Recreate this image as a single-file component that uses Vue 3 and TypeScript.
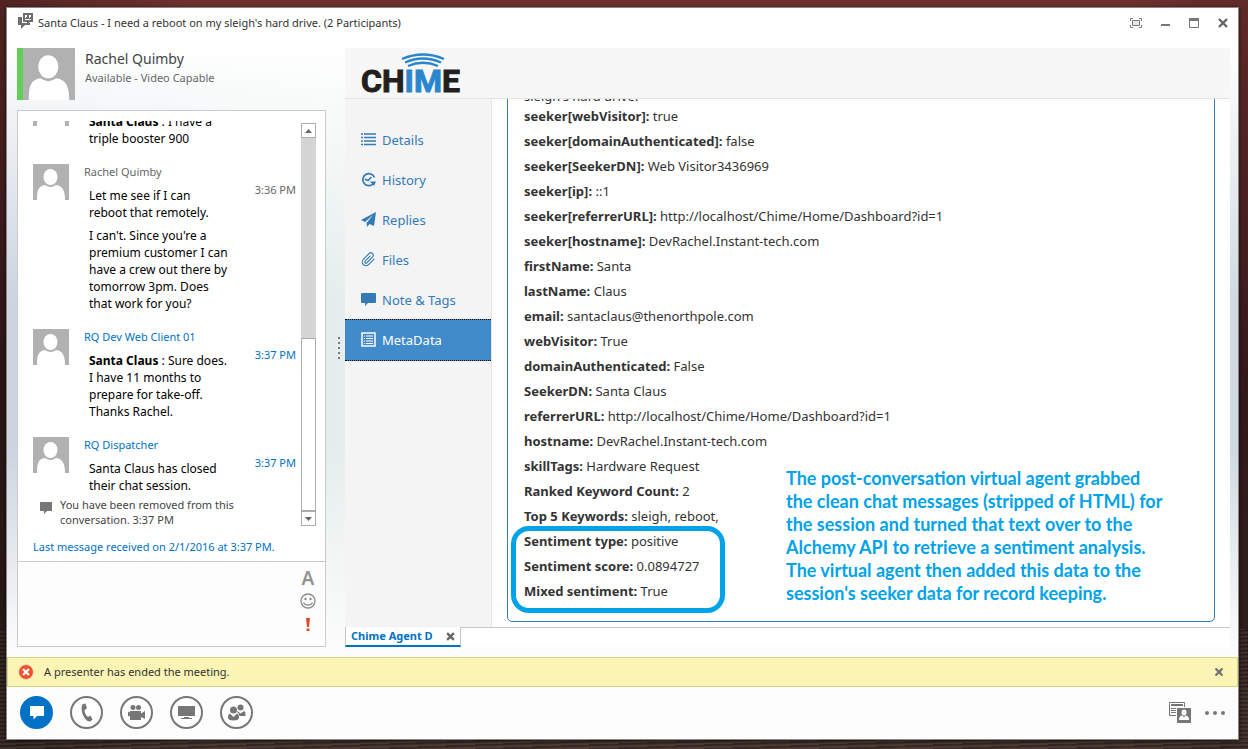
<script setup lang="ts">
interface ChatEntry { name: string; self?: boolean; time?: string; paragraphs: { speaker?: string; text: string }[] }
interface Field { label: string; value: string }

const chat: ChatEntry[] = [
  { name: 'RQ Dev Web Client 01', paragraphs: [{ speaker: 'Santa Claus', text: ' : I have a\ntriple booster 900' }] },
  {
    name: 'Rachel Quimby', self: true, time: '3:36 PM', paragraphs: [
      { text: 'Let me see if I can\nreboot that remotely.' },
      { text: "I can't. Since you're a\npremium customer I can\nhave a crew out there by\ntomorrow 3pm. Does\nthat work for you?" },
    ],
  },
  { name: 'RQ Dev Web Client 01', time: '3:37 PM', paragraphs: [{ speaker: 'Santa Claus', text: ' : Sure does.\nI have 11 months to\nprepare for take-off.\nThanks Rachel.' }] },
  { name: 'RQ Dispatcher', time: '3:37 PM', paragraphs: [{ text: 'Santa Claus has closed\ntheir chat session.' }] },
]

const fields: Field[] = [
  { label: 'seeker[webVisitor]:', value: 'true' },
  { label: 'seeker[domainAuthenticated]:', value: 'false' },
  { label: 'seeker[SeekerDN]:', value: 'Web Visitor3436969' },
  { label: 'seeker[ip]:', value: '::1' },
  { label: 'seeker[referrerURL]:', value: 'http://localhost/Chime/Home/Dashboard?id=1' },
  { label: 'seeker[hostname]:', value: 'DevRachel.Instant-tech.com' },
  { label: 'firstName:', value: 'Santa' },
  { label: 'lastName:', value: 'Claus' },
  { label: 'email:', value: 'santaclaus@thenorthpole.com' },
  { label: 'webVisitor:', value: 'True' },
  { label: 'domainAuthenticated:', value: 'False' },
  { label: 'SeekerDN:', value: 'Santa Claus' },
  { label: 'referrerURL:', value: 'http://localhost/Chime/Home/Dashboard?id=1' },
  { label: 'hostname:', value: 'DevRachel.Instant-tech.com' },
  { label: 'skillTags:', value: 'Hardware Request' },
  { label: 'Ranked Keyword Count:', value: '2' },
  { label: 'Top 5 Keywords:', value: 'sleigh, reboot,' },
]
const sentiment: Field[] = [
  { label: 'Sentiment type:', value: 'positive' },
  { label: 'Sentiment score:', value: '0.0894727' },
  { label: 'Mixed sentiment:', value: 'True' },
]
const nav = ['Details', 'History', 'Replies', 'Files', 'Note & Tags', 'MetaData']
</script>

<template>
  <div class="desktop">
    <main class="window">
      <header class="titlebar">
        <svg class="app-icon" width="16" height="17" viewBox="0 0 16 17" aria-hidden="true">
          <path fill="#6d6d6d" d="M0 4h4v6h8v2H7l-4 4v-4H0z" />
          <path fill="#6d6d6d" d="M5 0h10v9h-3l-3 3v-3H5z" />
          <path fill="#fff" d="M7 2h2v2H8v1H7zM11 2h2v2h-1v1h-1zM7 6h6v1H7z" />
        </svg>
        <h1>Santa Claus - I need a reboot on my sleigh's hard drive. (2 Participants)</h1>
        <div class="window-buttons">
          <button aria-label="Full screen">
            <svg width="12" height="10" viewBox="0 0 12 10"><path fill="none" stroke="#777" d="M.5 3V.5H3M9 .5h2.500V3M11.500 7v2.500H9M3 9.500H.5V7" /><path fill="#e8e8e8" stroke="#777" d="M2.500 2.500h7v5h-7z" /></svg>
          </button>
          <button aria-label="Minimize"><svg width="9" height="10" viewBox="0 0 9 10"><path fill="#777" d="M0 6h9v2H0z" /></svg></button>
          <button aria-label="Maximize"><svg width="10" height="10" viewBox="0 0 10 10"><path fill="none" stroke="#777" d="M.5.5h9v9h-9z" /><path fill="#777" d="M0 0h10v3H0z" /></svg></button>
          <button aria-label="Close"><svg width="10" height="10" viewBox="0 0 10 10"><path stroke="#666" stroke-width="2.400" d="m1 1 8 8M9 1 1 9" /></svg></button>
        </div>
      </header>

      <div class="body">
        <section class="conversation">
          <div class="contact">
            <svg class="portrait" width="52" height="52" viewBox="0 0 36 36" aria-hidden="true">
              <path fill="#b1b1b1" d="M0 0h36v36H0z" /><ellipse cx="17.500" cy="13" rx="7" ry="8" fill="#fff" />
              <path fill="#fff" d="M4 36c0-9 1-14 8-15q5.500 4 11 0c7 1 9 6 9 15z" />
            </svg>
            <div>
              <p class="contact-name">Rachel Quimby</p>
              <p class="contact-status">Available - Video Capable</p>
            </div>
          </div>

          <div class="chat-box">
            <div class="log-frame">
              <div class="log">
                <article v-for="(entry, i) in chat" :key="i" class="entry" :class="{ self: entry.self }">
                  <svg width="36" height="36" viewBox="0 0 36 36" aria-hidden="true">
                    <path fill="#b1b1b1" d="M0 0h36v36H0z" /><ellipse cx="17.500" cy="13" rx="7" ry="8" fill="#fff" />
                    <path fill="#fff" d="M4 36c0-9 1-14 8-15q5.500 4 11 0c7 1 9 6 9 15z" />
                  </svg>
                  <div class="entry-text">
                    <h2>{{ entry.name }}</h2>
                    <p v-for="(p, j) in entry.paragraphs" :key="j"><b v-if="p.speaker">{{ p.speaker }}</b>{{ p.text }}</p>
                  </div>
                  <time v-if="entry.time">{{ entry.time }}</time>
                </article>
                <div class="system">
                  <svg width="12" height="12" viewBox="0 0 12 12" aria-hidden="true"><path fill="#777" d="M0 0h12v9H7l-3 3V9H0z" /></svg>
                  <p>You have been removed from this<br>conversation. 3:37 PM</p>
                </div>
              </div>
              <div class="scrollbar">
                <button aria-label="Scroll up"><svg width="7" height="4" viewBox="0 0 7 4"><path fill="#666" d="M0 4 3.500 0 7 4z" /></svg></button>
                <span class="thumb"></span>
                <button aria-label="Scroll down"><svg width="7" height="4" viewBox="0 0 7 4"><path fill="#666" d="M0 0h7L3.500 4z" /></svg></button>
              </div>
            </div>
            <p class="last">Last message received on 2/1/2016 at 3:37 PM.</p>
            <div class="compose">
              <textarea aria-label="Message"></textarea>
              <div class="compose-tools">
                <button aria-label="Font" class="font-tool">A</button>
                <button aria-label="Emoticons"><svg width="16" height="16" viewBox="0 0 16 16"><circle cx="8" cy="8" r="7" fill="none" stroke="#8a8a8a" stroke-width="1.300" /><circle cx="5.500" cy="6" r="1.200" fill="#8a8a8a" /><circle cx="10.500" cy="6" r="1.200" fill="#8a8a8a" /><path fill="none" stroke="#8a8a8a" stroke-width="1.200" d="M3.500 9.500c1.500 3.500 7.500 3.500 9 0" /></svg></button>
                <button aria-label="High importance"><svg width="4" height="13" viewBox="0 0 4 13"><path fill="#dc4b29" d="M0 0h4l-1 9H1zM.5 10.500h3V13h-3z" /></svg></button>
              </div>
            </div>
          </div>
        </section>

        <div class="splitter" aria-hidden="true"><i></i><i></i><i></i><i></i><i></i></div>

        <section class="extension">
          <div class="brand">
            <svg width="100" height="44" viewBox="0 0 100 44" role="img" aria-label="Chime">
              <g fill="none" stroke="#2a86cc" stroke-width="2.300"><path d="M41 8q21-9 42 0M44 11.500q18-8 36 0M47 15q15-6.500 30 0" /></g>
              <text x="0" y="41" class="logo-text"><tspan fill="#231f20" stroke="#231f20">CH</tspan><tspan fill="#2a86cc" stroke="#2a86cc">IM</tspan><tspan fill="#231f20" stroke="#231f20">E</tspan></text>
            </svg>
          </div>
          <div class="panel">
            <nav>
              <a v-for="(item, i) in nav" :key="item" href="#" :class="{ active: i === 5 }">
                <svg width="15" height="15" viewBox="0 0 15 15" fill="none" stroke="currentColor" aria-hidden="true">
                  <path v-if="i === 0" stroke-width="1.500" d="M0 2h2M3 2h12M0 5.500h2M3 5.500h12M0 9h2M3 9h12M0 12.500h2M3 12.500h12" />
                  <g v-else-if="i === 1"><path stroke-width="1.700" d="M13.500 5.500A6 6 0 1 0 12 12M4 7l3 1.500L10.500 5" /><path stroke="none" fill="currentColor" d="M9 9.500h6L13 14z" /></g>
                  <path v-else-if="i === 2" stroke="none" fill="currentColor" d="M15 0 0 8l4 2 8-7-6.500 8L6 15l2.500-3L13 14z" />
                  <path v-else-if="i === 3" stroke-width="1.800" transform="scale(.62)" d="m21.440 11.050-9.190 9.190a6 6 0 0 1-8.490-8.490l9.190-9.190a4 4 0 0 1 5.660 5.660l-9.200 9.190a2 2 0 0 1-2.830-2.830l8.490-8.480" />
                  <path v-else-if="i === 4" stroke="none" fill="currentColor" d="M1 1h13q1 0 1 1v8q0 1-1 1H7l-3 3v-3H1q-1 0-1-1V2q0-1 1-1z" />
                  <g v-else><path stroke-width="1.500" d="M1 1h13v13H1z" /><path stroke-width="1.200" d="M3 4h1M5 4h7M3 6.500h1M5 6.500h7M3 9h1M5 9h7M3 11.500h1M5 11.500h7" /></g>
                </svg>
                <span>{{ item }}</span>
              </a>
            </nav>
            <div class="details">
              <div class="card">
                <p>sleigh's hard drive.</p>
                <dl>
                  <div v-for="f in fields" :key="f.label"><dt>{{ f.label }}</dt> <dd>{{ f.value }}</dd></div>
                </dl>
                <dl class="sentiment">
                  <div v-for="f in sentiment" :key="f.label"><dt>{{ f.label }}</dt> <dd>{{ f.value }}</dd></div>
                </dl>
                <p class="note">The post-conversation virtual agent grabbed<br>the clean chat messages (stripped of HTML) for<br>the session and turned that text over to the<br>Alchemy API to retrieve a sentiment analysis.<br>The virtual agent then added this data to the<br>session's seeker data for record keeping.</p>
              </div>
            </div>
          </div>
          <div class="tabs">
            <div class="tab"><a href="#">Chime Agent D</a><button aria-label="Close tab"><svg width="9" height="9" viewBox="0 0 8 8"><path stroke="#666" stroke-width="2" d="m1 1 6 6M7 1 1 7" /></svg></button></div>
          </div>
        </section>
      </div>

      <div class="notice" role="status">
        <svg width="16" height="16" viewBox="0 0 16 16" aria-hidden="true"><circle cx="8" cy="8" r="7.500" fill="#f0522d" stroke="#fbe3c0" /><path stroke="#fff" stroke-width="2.200" d="m5 5 6 6M11 5l-6 6" /></svg>
        <p>A presenter has ended the meeting.</p>
        <button aria-label="Dismiss"><svg width="8" height="8" viewBox="0 0 8 8"><path stroke="#707070" stroke-width="2.200" d="m.5.5 7 7M7.500.5l-7 7" /></svg></button>
      </div>

      <footer>
        <button class="round primary" aria-label="Messages"><svg width="17" height="17" viewBox="0 0 17 17"><path fill="#fff" d="M2 2h14v10H9l-3.500 3.500V12H2z" /></svg></button>
        <button class="round" aria-label="Call"><svg width="17" height="19" viewBox="0 0 17 19"><path fill="#767676" d="M5 1 7.500.5 9 5.500 6.500 7c0 3 1.500 5.500 3.500 7l2.500-1.500 2 4-1.500 1.500c-3 1.500-6-1.500-8-6-1.700-4-2-9 0-11z" /></svg></button>
        <button class="round" aria-label="Video"><svg width="19" height="17" viewBox="0 0 19 17"><g fill="#767676"><circle cx="6" cy="3.500" r="2.500" /><circle cx="11.500" cy="3.500" r="2.500" /><path d="M3 7h11v2.500L18 7v8l-4-2v3H3v-4L1 12.500v-5l2 1z" /></g></svg></button>
        <button class="round" aria-label="Present"><svg width="19" height="15" viewBox="0 0 19 15"><path fill="#767676" d="M1 1h17v10H1zM7 12h5v1h3v1H4v-1h3z" /></svg></button>
        <button class="round" aria-label="Participants"><svg width="19" height="17" viewBox="0 0 19 17"><g fill="#767676"><circle cx="13.500" cy="3.500" r="3" /><path d="m10.500 7 3 2.500L17 7q2 1 1.500 5h-6Q12 9 10 8z" /><circle cx="6.500" cy="6" r="3.500" /><path d="m3 9.500 3.500 3.500L10 9.500q2.500 1 2 4.500-.5 2.500-5.500 2.500T1 14q-.5-3.500 2-4.500z" /></g></svg></button>
        <span class="grow"></span>
        <button aria-label="Contact card"><svg width="22" height="21" viewBox="0 0 22 21"><path fill="#fff" stroke="#767676" d="M.5.5h15v13H.5z" /><path fill="#767676" d="M2 2h12v2H2zM2 6h6v1H2zM2 8h5v1H2zM2 10h5v1H2z" /><path fill="#fff" d="M7 5h15v16H7z" /><path fill="#767676" d="M8 6h14v15H8z" /><ellipse cx="15" cy="10.500" rx="2.500" ry="3" fill="#fff" /><path fill="#fff" d="M10 18q0-4 3-4.500l2 1.500 2-1.500q3 .5 3 4.500z" /></svg></button>
        <button aria-label="More options"><svg width="20" height="4" viewBox="0 0 20 4"><g fill="#767676"><circle cx="2" cy="2" r="2" /><circle cx="10" cy="2" r="2" /><circle cx="18" cy="2" r="2" /></g></svg></button>
      </footer>
    </main>
  </div>
</template>

<style>
body { margin: 0; }
</style>

<style scoped>
* { box-sizing: border-box; }
p, h1, h2, dl, dd { margin: 0; font-weight: 400; }
button { padding: 0; border: 0; background: none; font: inherit; display: grid; place-items: center; }
svg { display: block; flex: none; }
a { text-decoration: none; }
.desktop {
  height: 100vh; padding: 7px 9px 9px 6px; display: flex;
  background:
    repeating-linear-gradient(178deg, #0003 0 1px, #fff1 3px 4px) bottom / 100% 16% no-repeat,
    linear-gradient(90deg, #0004, #0000 15% 90%, #0002),
    linear-gradient(#6e312e, #3c1d20 50%, #34221f 82%, #42302a);
  font: 11px/16px "Noto Sans", "Open Sans", sans-serif; color: #333;
}
.window {
  flex: 1; min-width: 0; display: flex; flex-direction: column; border: 1px solid #8b8684; box-shadow: 0 1px 4px #000a;
  background: linear-gradient(#fff 5%, #fff0 40%, #fff0 60%, #fcfcfc 88%), linear-gradient(90deg, #cbd4df, #e6efed 28%, #eaf0f0 90%, #cfd9df);
}
.titlebar { display: flex; align-items: flex-start; height: 40px; padding: 5px 10px 0 11px; gap: 4px; }
.titlebar h1 { font-size: 11px; line-height: 20px; flex: 1; color: #333; white-space: nowrap; }
.window-buttons { display: flex; gap: 19px; padding-top: 5px; }
.body { flex: 1; min-height: 0; display: flex; padding: 0 8px 10px 10px; }
.conversation { width: 309px; display: flex; flex-direction: column; }
.contact { display: flex; gap: 10px; margin-bottom: 10px; }
.portrait { border-left: 6px solid #5fd054; box-sizing: content-box; }
.contact-name { font-size: 14px; line-height: 22px; color: #444; }
.contact-status { line-height: 16px; color: #666; }
.chat-box { flex: 1; min-height: 0; border: 1px solid #c8cacc; background: #fff; display: flex; flex-direction: column; }
.log-frame { flex: 1; min-height: 0; display: flex; justify-content: space-between; padding: 10px 9px 0 15px; }
.log { flex: 1; overflow: hidden; display: flex; flex-direction: column; justify-content: flex-end; padding-bottom: 1px; }
.entry { flex: none; display: flex; gap: 15px; margin-bottom: 17px; color: #0072c6; }
.entry:nth-last-child(2) { margin-bottom: 3px; }
.entry-text { flex: 1; }
.entry h2 { font-size: 11px; line-height: 16px; margin-bottom: 7px; }
.entry p { font-size: 12px; line-height: 17px; color: #000; padding-left: 5px; white-space: pre; }
.entry p + p { margin-top: 6px; }
.entry time { padding: 18px 5px 0 0; white-space: nowrap; }
.self h2, .self time { color: #666; }
.system { flex: none; display: flex; gap: 8px; padding-left: 7px; line-height: 15px; white-space: nowrap; color: #444; }
.system svg { margin-top: 5px; }
.scrollbar { width: 15px; margin: 2px 0; display: flex; flex-direction: column; background: #d4d4d4; }
.scrollbar button { height: 15px; border: 1px solid #acacac; background: #fff; }
.thumb { height: 43%; margin-top: auto; border: 1px solid #acacac; background: #fff; }
.last { padding: 11px 15px 6px; color: #0072c6; white-space: nowrap; }
.compose { height: 85px; border-top: 1px solid #c8cacc; display: flex; background: #fdfdfd; }
.compose textarea { flex: 1; min-width: 0; border: 0; resize: none; background: none; outline: 0; }
.compose-tools { padding: 6px 9px; display: flex; flex-direction: column; gap: 3px; }
.compose-tools button { height: 20px; width: 16px; }
.compose-tools .font-tool { font-size: 19px; font-weight: 600; color: #929292; }
.splitter { width: 19px; display: flex; flex-direction: column; justify-content: center; align-items: center; gap: 3px; padding-left: 7px; }
.splitter i { width: 2px; height: 2px; background: #777; }
.extension { flex: 1; min-width: 0; display: flex; flex-direction: column; background: #fff; }
.brand { background: #f7f7f7; border-bottom: 1px solid #e4e4e4; padding: 3px 16px; }
.logo-text { font: 700 32px Roboto, sans-serif; stroke-width: 1; }
.panel { flex: 1; min-height: 0; display: flex; }
nav { width: 147px; padding-top: 21px; background: #f4f4f4; border-right: 1px solid #e7e7e7; }
nav a { display: flex; align-items: center; gap: 6px; height: 40px; padding-left: 16px; color: #337ab7; font-size: 13px; }
nav svg { margin-bottom: 2px; }
nav .active { height: 42px; margin-top: -1px; background: #428bca; color: #fff; border: dotted #000; border-width: 1px 0; }
.details { flex: 1; min-width: 0; padding: 0 15px 5px; overflow: hidden; display: flex; flex-direction: column; justify-content: flex-end; }
.card { position: relative; flex: none; border: 1px solid #337ab7; border-radius: 5px; padding: 20px 16px 15px; font-size: 13px; line-height: 20px; }
.card dl div { margin-bottom: 5px; }
dt, dd { display: inline; }
dt { font-weight: 700; }
.sentiment { position: relative; width: max-content; }
.sentiment::after { content: ""; position: absolute; inset: -5px -25px -12px -13px; border: 5px solid #00a2e8; border-radius: 18px; }
.note { position: absolute; left: 278px; bottom: 16px; font: 700 18px/23px Lato, sans-serif; color: #00a2e8; white-space: nowrap; }
.tabs { border-top: 1px solid #c8c8c8; height: 20px; display: flex; }
.tab { display: flex; gap: 13px; align-items: center; padding: 0 5px; margin-top: -1px; background: #fff; border: solid #c8c8c8; border-width: 0 1px 2px; border-bottom-color: #0072c6; }
.tab a { font-weight: 700; color: #0072c6; }
.notice { height: 30px; display: flex; align-items: center; gap: 10px; padding: 0 14px 0 10px; background: #fcf5b5; border: 1px solid #d6d486; }
.notice p { flex: 1; }
footer { height: 52px; display: flex; align-items: center; gap: 17px; padding: 0 13px 1px; background: #fdfdfd; }
.round { width: 33px; height: 33px; border: 2px solid #767676; border-radius: 50%; background: #fff; }
.primary { background: #0072c6; border-color: #0072c6; }
.grow { flex: 1; }
footer .grow ~ button + button { margin-left: -3px; }
</style>
